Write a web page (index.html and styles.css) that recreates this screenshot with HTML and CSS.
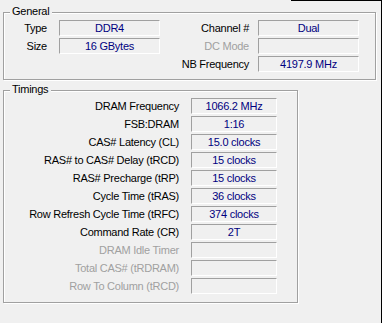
FILE: index.html
```html
<!DOCTYPE html>
<html>
<head>
<meta charset="utf-8">
<link rel="stylesheet" href="styles.css">
</head>
<body>
<div class="window">
  <div class="group general">
    <div class="group-title">General</div>
    <div class="general-grid">
      <div class="lbl">Type</div>
      <div class="field">DDR4</div>
      <div class="lbl">Channel #</div>
      <div class="field">Dual</div>

      <div class="lbl">Size</div>
      <div class="field">16 GBytes</div>
      <div class="lbl disabled">DC Mode</div>
      <div class="field"></div>

      <div class="lbl"></div>
      <div class="spacer"></div>
      <div class="lbl">NB Frequency</div>
      <div class="field">4197.9 MHz</div>
    </div>
  </div>

  <div class="group timings">
    <div class="group-title">Timings</div>
    <div class="timings-grid">
      <div class="lbl">DRAM Frequency</div><div class="field">1066.2 MHz</div>
      <div class="lbl">FSB:DRAM</div><div class="field">1:16</div>
      <div class="lbl">CAS# Latency (CL)</div><div class="field">15.0 clocks</div>
      <div class="lbl">RAS# to CAS# Delay (tRCD)</div><div class="field">15 clocks</div>
      <div class="lbl">RAS# Precharge (tRP)</div><div class="field">15 clocks</div>
      <div class="lbl">Cycle Time (tRAS)</div><div class="field">36 clocks</div>
      <div class="lbl">Row Refresh Cycle Time (tRFC)</div><div class="field">374 clocks</div>
      <div class="lbl">Command Rate (CR)</div><div class="field">2T</div>
      <div class="lbl disabled">DRAM Idle Timer</div><div class="field"></div>
      <div class="lbl disabled">Total CAS# (tRDRAM)</div><div class="field"></div>
      <div class="lbl disabled">Row To Column (tRCD)</div><div class="field"></div>
    </div>
  </div>
  <div class="edge-right"></div>
  <div class="edge-top"></div>
</div>
</body>
</html>
```

FILE: styles.css
```css
html, body {
  margin: 0;
  padding: 0;
  background: #f0f0f0;
}

.window {
  position: relative;
  width: 382px;
  height: 323px;
  box-sizing: border-box;
  padding: 12px 0 0 3px;
  background: #f0f0f0;
  font-family: "Liberation Sans", Arial, sans-serif;
  font-size: 11px;
  letter-spacing: -0.25px;
  color: #000;
  overflow: hidden;
}

.group {
  position: relative;
  box-sizing: border-box;
  border: 1px solid #a0a0a0;
  box-shadow: inset 1px 1px 0 #fff, 1px 1px 0 #fff;
}

.group-title {
  position: absolute;
  top: -8px;
  left: 6px;
  padding: 0 3px 0 2px;
  line-height: 13px;
  background: #f0f0f0;
}

.general {
  width: 373px;
  height: 68px;
  padding-top: 7px;
}

.general-grid {
  display: grid;
  grid-template-columns: 55px 101px 98px 101px;
  grid-auto-rows: 16px;
  row-gap: 2px;
}

.timings {
  width: 295px;
  height: 213px;
  margin-top: 10px;
  padding-top: 7px;
}

.timings-grid {
  display: grid;
  grid-template-columns: 187px 86px;
  grid-auto-rows: 16px;
  row-gap: 2px;
}

.lbl {
  text-align: right;
  line-height: 16px;
  white-space: nowrap;
}

.general-grid .lbl:nth-child(4n+1) {
  padding-right: 12px;
}

.general-grid .lbl:nth-child(4n+3) {
  padding-right: 9px;
}

.timings-grid .lbl {
  padding-right: 12px;
}

.lbl.disabled {
  color: #a0a0a0;
}

.field {
  box-sizing: border-box;
  height: 16px;
  border-top: 1px solid #a0a0a0;
  border-left: 1px solid #a0a0a0;
  border-bottom: 1px solid #fff;
  border-right: 1px solid #fff;
  color: #000080;
  text-align: center;
  line-height: 14px;
  white-space: nowrap;
}

.edge-right {
  position: absolute;
  top: 0;
  right: 0;
  width: 1px;
  height: 323px;
  background: #000;
}

.edge-top {
  position: absolute;
  top: 0;
  left: 291px;
  width: 91px;
  height: 1px;
  background: #000;
}
```
